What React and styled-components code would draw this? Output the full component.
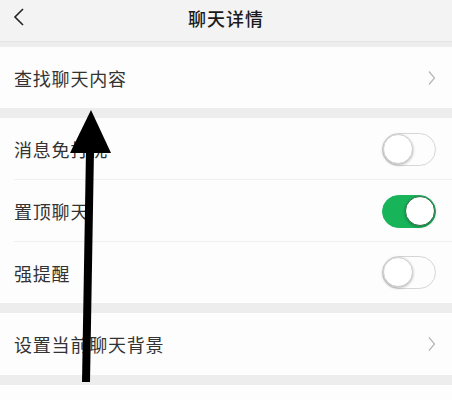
import styled, { createGlobalStyle } from "styled-components";

const Global = createGlobalStyle`
  html, body {
    margin: 0;
    padding: 0;
    background: #ededed;
    font-family: "Noto Sans CJK SC", "Noto Sans", sans-serif;
  }
`;

const Page = styled.div`
  position: relative;
  width: 452px;
  height: 400px;
  overflow: hidden;
  background: #ededed;
  display: flex;
  flex-direction: column;
`;

const NavBar = styled.div`
  height: 41px;
  display: flex;
  align-items: center;
  justify-content: center;
  position: relative;
  background: #f3f3f3;
  border-bottom: 1px solid #e4e4e4;
`;

const BackBtn = styled.div`
  position: absolute;
  left: 12px;
  top: 7px;
  width: 16px;
  height: 20px;
  display: flex;
`;

const Title = styled.div`
  font-size: 18px;
  font-weight: 500;
  color: #1a1a1a;
  letter-spacing: 1px;
  margin-top: -6px;
`;

const Group = styled.div`
  background: #fdfdfd;
  margin-top: ${(p) => p.$gap}px;
`;

const Row = styled.div`
  height: ${(p) => p.$h || 62}px;
  display: flex;
  align-items: center;
  padding: 0 16px 0 14px;
  position: relative;
  &:not(:last-child)::after {
    content: "";
    position: absolute;
    left: 14px;
    right: 0;
    bottom: 0;
    height: 1px;
    background: #f0f0f0;
  }
`;

const Label = styled.div`
  flex: 1;
  font-size: 18px;
  letter-spacing: 0.8px;
  color: #333;
`;

const Toggle = styled.div`
  width: 54px;
  height: 33px;
  border-radius: 17px;
  box-sizing: border-box;
  margin-right: 0;
  position: relative;
  background: ${(p) => (p.$on ? "#17b45a" : "#fdfdfd")};
  border: 1.5px solid ${(p) => (p.$on ? "#17b45a" : "#d6d6d6")};
`;

const Knob = styled.div`
  position: absolute;
  top: 0;
  ${(p) => (p.$on ? "right: 0;" : "left: 0;")}
  width: 30px;
  height: 30px;
  border-radius: 50%;
  background: #fff;
  box-shadow: 0 1px 3px rgba(0, 0, 0, 0.3);
  border: ${(p) => (p.$on ? "1px solid #2e6e46" : "1px solid #cfcfcf")};
  box-sizing: border-box;
`;

const Arrow = styled.svg`
  position: absolute;
  left: 0;
  top: 0;
  pointer-events: none;
`;

const Chevron = () => (
  <svg width="8" height="16" viewBox="0 0 8 16">
    <path d="M1 1.5 L6.5 8 L1 14.5" fill="none" stroke="#b5b5b5" strokeWidth="1.2" />
  </svg>
);

const Switch = ({ on }) => (
  <Toggle $on={on}>
    <Knob $on={on} />
  </Toggle>
);

export default function App() {
  return (
    <Page>
      <Global />
      <NavBar>
        <BackBtn>
          <svg width="14" height="20" viewBox="0 0 14 20">
            <path d="M11 2 L3 10 L11 18" fill="none" stroke="#222" strokeWidth="1.6" />
          </svg>
        </BackBtn>
        <Title>聊天详情</Title>
      </NavBar>
      <Group $gap={5}>
        <Row $h={61}>
          <Label>查找聊天内容</Label>
          <Chevron />
        </Row>
      </Group>
      <Group $gap={10}>
        <Row>
          <Label>消息免打扰</Label>
          <Switch />
        </Row>
        <Row $h={62}>
          <Label>置顶聊天</Label>
          <Switch on />
        </Row>
        <Row $h={61}>
          <Label>强提醒</Label>
          <Switch />
        </Row>
      </Group>
      <Group $gap={10}>
        <Row>
          <Label>设置当前聊天背景</Label>
          <Chevron />
        </Row>
      </Group>
      <Group $gap={10} style={{ flex: 1 }} />
      <Arrow width="452" height="400" viewBox="0 0 452 400">
        <path d="M86 382 L90 150" stroke="#000" strokeWidth="8" />
        <polygon points="91,110 70,153 111,153" fill="#000" />
      </Arrow>
    </Page>
  );
}
